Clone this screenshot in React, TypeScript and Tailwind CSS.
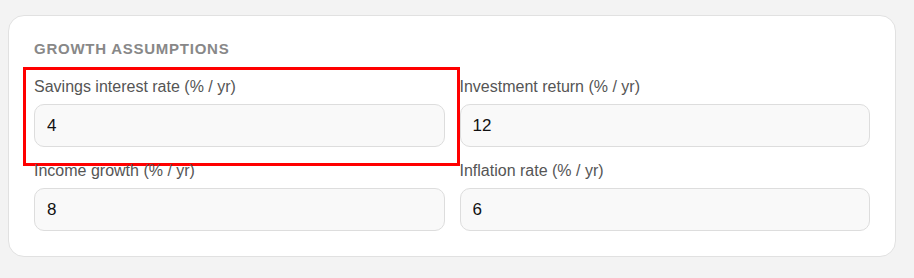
import React from "react";

const fields = [
  { label: "Savings interest rate (% / yr)", value: "4", highlight: true },
  { label: "Investment return (% / yr)", value: "12" },
  { label: "Income growth (% / yr)", value: "8" },
  { label: "Inflation rate (% / yr)", value: "6" },
];

export default function App() {
  return (
    <div
      className="min-h-[278px] w-[914px] bg-[#f3f3f3] pt-[15px] pl-[8px]"
      style={{ fontFamily: '"Liberation Sans", Arial, sans-serif' }}
    >
      <div className="w-[888px] rounded-[16px] border border-[#e1e1e1] bg-white p-[25px]">
        <h2 className="text-[15px] font-bold leading-[16px] tracking-wider text-[#888888] uppercase">
          Growth Assumptions
        </h2>
        <div className="mt-[21px] grid grid-cols-2 gap-x-[15px] gap-y-[15px]">
          {fields.map((f) => (
            <div key={f.label} className="relative flex flex-col">
              {f.highlight && (
                <div className="pointer-events-none absolute -left-[11px] -top-[11px] h-[99px] w-[437px] border-[3px] border-[#ff0000]" />
              )}
              <label className="text-[16px] leading-[18px] text-[#555555]">{f.label}</label>
              <input
                readOnly
                value={f.value}
                className="mt-[8px] h-[43px] w-full rounded-[10px] border border-[#dddddd] bg-[#f9f9f9] px-3 text-[17px] text-[#111111] outline-none"
                style={{ fontFamily: '"Liberation Sans", Arial, sans-serif' }}
              />
            </div>
          ))}
        </div>
      </div>
    </div>
  );
}
